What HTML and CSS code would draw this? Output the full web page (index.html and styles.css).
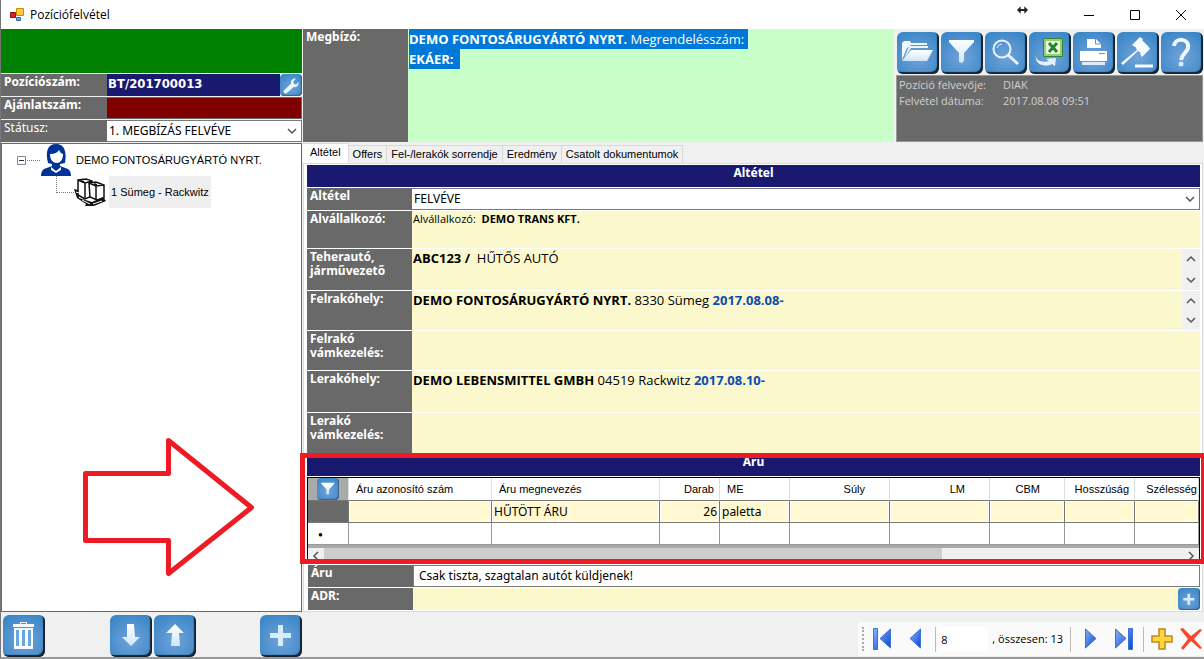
FILE: index.html
```html
<!DOCTYPE html>
<html lang="hu">
<head>
<meta charset="utf-8">
<title>Pozíciófelvétel</title>
<link rel="stylesheet" href="styles.css">
</head>
<body>
<svg class="defs" aria-hidden="true">
  <defs>
    <linearGradient id="ice" x1="0" y1="0" x2="0" y2="1"><stop offset="0" stop-color="#fff"/><stop offset="1" stop-color="#cfe6f8"/></linearGradient>
    <linearGradient id="nav" x1="0" y1="0" x2="1" y2="1"><stop offset="0" stop-color="#86b4fa"/><stop offset="1" stop-color="#0a46cc"/></linearGradient>
    <symbol id="funnel" viewBox="0 0 40 40"><path fill="url(#ice)" d="M8 7h25v2L23 20v8l-2 2-3-1v-9L8 9z"/></symbol>
    <symbol id="plus" viewBox="0 0 40 40"><path fill="#d8edfc" d="M18 9h5v8h8v5h-8v8h-5v-8h-8v-5h8z"/></symbol>
    <symbol id="down" viewBox="0 0 12 8"><path fill="none" stroke="#555" stroke-width="1.500" d="M2 2l4 4 4-4"/></symbol>
  </defs>
</svg>
<div class="window">
  <header class="titlebar">
    <svg class="app-icon" viewBox="0 0 14 14"><path fill="#ffcc40" stroke="#c98a00" d="M6.500.5h7v7h-7z"/><path fill="#d22" stroke="#811" d="M.5 4.500h5v5h-5z"/><path fill="#68a7ef" stroke="#3467ad" d="M6.500 9.500h4v3h-4z"/></svg>
    <h1 class="title">Pozíciófelvétel</h1>
    <svg class="resize" viewBox="0 0 12 8"><path fill="#222" d="M0 4l4-4v3h4V0l4 4-4 4V5H4v3z"/></svg>
    <div class="window-controls">
      <button aria-label="Kis méret"><svg viewBox="0 0 12 12"><path d="M1 6.500h10"/></svg></button>
      <button aria-label="Teljes méret"><svg viewBox="0 0 12 12"><path d="M1.500 1.500h9v9h-9z"/></svg></button>
      <button aria-label="Bezárás"><svg viewBox="0 0 12 12"><path d="M1 1l10 10M11 1L1 11"/></svg></button>
    </div>
  </header>

  <div class="workspace">
    <aside class="sidebar">
      <div class="flag"></div>
      <div class="field"><span class="label">Pozíciószám:</span><strong class="position-number">BT/201700013</strong>
        <button class="tile small" aria-label="Beállítás"><svg viewBox="0 0 40 40"><path fill="#eef7ff" d="M7 30l14-14c-1-5 3-10 9-9l-5 6 2 4 4 1 4-5c1 7-3 11-9 10L12 35c-4 1-6-2-5-5z"/></svg></button></div>
      <div class="field"><span class="label">Ajánlatszám:</span><span class="offer-number"></span></div>
      <div class="field"><label class="label light" for="status">Státusz:</label>
        <div class="select"><select id="status"><option>1. MEGBÍZÁS FELVÉVE</option></select><svg><use href="#down"/></svg></div></div>
      <div class="tree">
        <div class="node">
          <svg class="toggle" viewBox="0 0 9 9"><path fill="#fff" stroke="#888" d="M.5.5h8v8h-8z"/><path stroke="#235" d="M2 4.500h5"/></svg>
          <span class="dots"></span>
          <svg class="person" viewBox="0 0 30 32"><path fill="#003399" d="M7 19C4 7 7 0 15 0s11 7 9 19l-5 1v2l8 3q3 2 3 7H0q0-5 3-7l8-3v-2z"/><path fill="#fff" d="M9 10q7 0 9-4 1 3 4 4c0 6-3 9-6 9-4 0-7-3-7-9zM10 23l5 4 5-4v3l-5 3-5-3z"/></svg>
          <span>DEMO FONTOSÁRUGYÁRTÓ NYRT.</span>
        </div>
        <div class="node child">
          <span class="elbow"></span>
          <svg class="cargo" viewBox="0 0 32 28"><g fill="#fff" stroke="#111" stroke-width="1.500"><path d="M4 2l8-1 6 2v15l-7 3-7-4z"/><path d="M15 5l7-1 8 3v13l-7 2-7-3z"/><path d="M4 2l7 3 7-2M11 5v15M15 5l7 3 8-1M22 8v14"/></g><path fill="#111" d="M0 11l4 1 1 8 13 4 11-5 3 4-12 5h-9l1-2-9-6zM7 2l3 1v2L7 4zM20 5l3 1v2l-3-1z"/><path stroke="#fff" d="M8 22l8 4M19 26l9-3M2 14l3 1"/></svg>
          <span class="selected">1 Sümeg - Rackwitz</span>
        </div>
        <svg class="arrow" viewBox="0 0 176 140"><path fill="none" stroke="#ed1c24" stroke-width="5" stroke-linejoin="round" d="M4.500 36.500h83v-33l83 67-83 66v-33h-83z"/></svg>
      </div>
      <div class="side-actions">
        <button class="tile" aria-label="Törlés"><svg viewBox="0 0 40 40"><path fill="#f5faff" d="M10 8h7V6h7v2h7v3H10zM11 12h19v21H11z"/><path fill="none" stroke="#4e90cd" d="M18 7.500h5"/><path stroke="#6aa6dc" stroke-width="3" d="M14.500 14v16M20.500 14v16M26.500 14v16"/></svg></button>
        <div class="pair">
          <button class="tile" aria-label="Le"><svg viewBox="0 0 40 40"><path fill="url(#ice)" d="M17 8h7l1 13h5l-9 9-9-9h5z"/></svg></button>
          <button class="tile" aria-label="Fel"><svg viewBox="0 0 40 40"><path fill="url(#ice)" d="M21 8l9 9h-5l1 13h-9l1-13h-6z"/></svg></button>
        </div>
        <button class="tile" aria-label="Hozzáadás"><svg viewBox="0 0 40 40"><use href="#plus"/></svg></button>
      </div>
    </aside>

    <main class="main">
      <section class="summary">
        <div class="label client-label">Megbízó:</div>
        <div class="client"><mark><b>DEMO FONTOSÁRUGYÁRTÓ NYRT.</b> Megrendelésszám:&nbsp;</mark><br><mark><b>EKÁER:</b>&nbsp;&nbsp;</mark></div>
        <div class="tools">
          <div class="toolbar">
            <button class="tile" aria-label="Megnyitás"><svg viewBox="0 0 40 40"><path fill="#f1f8fe" d="M5 10l2-2h6l1 2h16v2H14l-4 3-5 12z"/><path fill="#e9f4fd" d="M12 13h19v2H14l-7 11z"/><path fill="url(#ice)" d="M14 17h22l-6 11H5z"/></svg></button>
            <button class="tile" aria-label="Szűrő"><svg><use href="#funnel"/></svg></button>
            <button class="tile" aria-label="Keresés"><svg viewBox="0 0 40 40"><circle cx="17" cy="16" r="8.500" fill="none" stroke="#e6f2fc" stroke-width="2"/><path fill="none" stroke="#e6f2fc" d="M12 15q1-4 5-4"/><path stroke="#e6f2fc" stroke-width="3" d="M23 22l10 9"/></svg></button>
            <button class="tile" aria-label="Excel export"><svg viewBox="0 0 40 40"><path fill="#8fd07c" stroke="#318735" d="M14.500 5.500h19v18h-19z"/><path fill="#eef6dc" d="M17 8h14v13H17z"/><path stroke="#23842c" stroke-width="3" d="M20 10l8 9M28 10l-8 9"/><path fill="#e5f2fd" d="M7 22c0 2 0 3 2 5 3 2 8 2 11 1l-3-2 10-1-1 8-3-2C15 35 5 31 7 22z"/></svg></button>
            <button class="tile" aria-label="Nyomtatás"><svg viewBox="0 0 40 40"><path fill="#fff" d="M14 6h9l5 5v4H14zM7 18h27v10H7z"/><path fill="none" stroke="#5495cf" d="M22.500 6v5h5M26 20.500h6"/><path fill="#dceefb" d="M9 29h23v3H9z"/></svg></button>
            <button class="tile" aria-label="Aukció"><svg viewBox="0 0 40 40"><path fill="#f5faff" d="M15 12l8-8 3 2-8 8zM23 21l8-8 2 3-8 8zM18 13l7-6 6 6-7 7-3-2L6 32l-2-2 16-13z"/><path stroke="#f5faff" stroke-width="3" d="M18 33h18"/></svg></button>
            <button class="tile" aria-label="Súgó"><svg viewBox="0 0 40 40"><path fill="none" stroke="#f0f8ff" stroke-width="4" d="M13 13c1-9 16-8 14 2-1 5-6 5-7 12"/><circle cx="20" cy="31" r="2.500" fill="#d5eafa"/></svg></button>
          </div>
          <dl class="meta"><dt>Pozíció felvevője:</dt><dd>DIAK</dd><dt>Felvétel dátuma:</dt><dd>2017.08.08 09:51</dd></dl>
        </div>
      </section>

      <nav class="tabs" role="tablist">
        <button role="tab" aria-selected="true">Altétel</button><button role="tab">Offers</button><button role="tab">Fel-/lerakók sorrendje</button><button role="tab">Eredmény</button><button role="tab">Csatolt dokumentumok</button>
      </nav>

      <section class="panel">
        <h2 class="band">Altétel</h2>
        <div class="row line"><label class="label" for="item">Altétel</label><div class="select"><select id="item"><option>FELVÉVE</option></select><svg><use href="#down"/></svg></div></div>
        <div class="row"><div class="label">Alvállalkozó:</div><div class="value small-text">Alvállalkozó: &nbsp;<b>DEMO TRANS KFT.</b></div></div>
        <div class="row tall"><div class="label">Teherautó, járművezető</div><div class="value"><b>ABC123 /</b>&nbsp; HŰTŐS AUTÓ<span class="spin"><svg class="up"><use href="#down"/></svg><svg><use href="#down"/></svg></span></div></div>
        <div class="row mid"><div class="label">Felrakóhely:</div><div class="value"><b>DEMO FONTOSÁRUGYÁRTÓ NYRT.</b> 8330 Sümeg <b class="date">2017.08.08-</b><span class="spin"><svg class="up"><use href="#down"/></svg><svg><use href="#down"/></svg></span></div></div>
        <div class="row mid"><div class="label">Felrakó vámkezelés:</div><div class="value"></div></div>
        <div class="row tall"><div class="label">Lerakóhely:</div><div class="value"><b>DEMO LEBENSMITTEL GMBH</b> 04519 Rackwitz <b class="date">2017.08.10-</b></div></div>
        <div class="row tall"><div class="label">Lerakó vámkezelés:</div><div class="value"></div></div>

        <section class="goods">
          <h2 class="band goods-band">Áru</h2>
          <div class="grid-box">
            <table>
              <colgroup><col class="c-head"><col class="c-id"><col class="c-name"><col class="c-qty"><col class="c-unit"><col class="c-wide"><col class="c-wide"><col class="c-cbm"><col class="c-unit"><col></colgroup>
              <thead><tr><th class="corner"><button class="tile small" aria-label="Szűrő"><svg><use href="#funnel"/></svg></button></th><th>Áru azonosító szám</th><th>Áru megnevezés</th><th class="num tight">Darab</th><th>ME</th><th class="num">Súly</th><th class="num">LM</th><th class="num">CBM</th><th class="num tight">Hosszúság</th><th class="num edge">Szélesség</th></tr></thead>
              <tbody>
                <tr class="current"><td class="rowhead"></td><td></td><td>HŰTÖTT ÁRU</td><td class="num">26</td><td>paletta</td><td></td><td></td><td></td><td></td><td></td></tr>
                <tr class="new"><td class="star">●</td><td></td><td></td><td></td><td></td><td></td><td></td><td></td><td></td><td></td></tr>
              </tbody>
            </table>
            <div class="scroll"><svg class="left"><use href="#down"/></svg><span class="track"><span class="thumb"></span></span><svg class="right"><use href="#down"/></svg></div>
          </div>
        </section>

        <div class="row line note"><label class="label" for="note">Áru</label><input id="note" value="Csak tiszta, szagtalan autót küldjenek!"></div>
        <div class="row line note"><div class="label">ADR:</div><div class="value adr"><button class="tile small" aria-label="ADR hozzáadása"><svg viewBox="0 0 40 40"><use href="#plus"/></svg></button></div></div>
      </section>

      <footer class="pager-bar">
        <div class="pager">
          <span class="grip"></span>
          <button aria-label="Első"><svg viewBox="0 0 20 22"><path fill="url(#nav)" stroke="#3a72dc" d="M1.500.5h4v21h-4zM18.500 1v19L8 10.500z"/></svg></button>
          <button aria-label="Előző"><svg viewBox="0 0 20 22"><path fill="url(#nav)" stroke="#3a72dc" d="M14.500 1v19L4 10.500z"/></svg></button>
          <span class="divider"></span>
          <input id="page" aria-label="Oldal" value="8">
          <label for="page" class="total">, összesen: 13</label>
          <span class="divider"></span>
          <button aria-label="Következő"><svg viewBox="0 0 20 22"><path fill="url(#nav)" stroke="#3a72dc" d="M5.500 1v19L16 10.500z"/></svg></button>
          <button aria-label="Utolsó"><svg viewBox="0 0 20 22"><path fill="url(#nav)" stroke="#3a72dc" d="M14.500.5h4v21h-4zM1.500 1v19L12 10.500z"/></svg></button>
          <span class="divider"></span>
          <button class="edit" aria-label="Új"><svg viewBox="0 0 22 22"><path fill="#ffd43e" stroke="#b98a1c" stroke-width="1.500" d="M8 1h6v7h7v6h-7v7H8v-7H1V8h7z"/></svg></button>
          <button class="remove" aria-label="Törlés"><svg viewBox="0 0 22 22"><path fill="#f8452c" d="M0 1l3-1 8 8 9-7 2 1-8 9 8 9-2 1-9-8-8 9-2-2 7-9z"/></svg></button>
        </div>
      </footer>
    </main>
  </div>
</div>
</body>
</html>
```
FILE: styles.css
```css
* { box-sizing: border-box; }
body { margin: 0; font: 12px/16px "Noto Sans", sans-serif; color: #000; }
h1, h2, dl, dd { margin: 0; }
button, input, select { font: inherit; color: inherit; margin: 0; padding: 0; border: 0; border-radius: 0; background: none; }
svg { display: block; flex: none; }
.defs { position: absolute; width: 0; height: 0; }

.window { display: flex; flex-direction: column; min-height: 100vh; overflow: hidden; background: #f0f0f0; border-left: 1px solid #777; border-bottom: 2px solid #999; }
.titlebar { display: flex; align-items: center; height: 29px; padding-left: 9px; background: #fff; }
.app-icon { width: 14px; height: 14px; }
.title { flex: 1; padding-left: 6px; font: 12px/16px "Open Sans", sans-serif; }
.resize { width: 11px; height: 8px; margin: 0 38px 10px 0; }
.window-controls { display: flex; }
.window-controls button { width: 46px; height: 28px; display: grid; place-items: center; }
.window-controls svg { width: 12px; height: 12px; fill: none; stroke: #000; }

.workspace { flex: 1; display: grid; grid-template-columns: 302px minmax(0, 1fr); }
.sidebar { display: flex; flex-direction: column; gap: 1px; }
.flag { height: 44px; margin-right: 1px; background: #008000; }
.field { display: grid; grid-template-columns: 106px 1fr auto; min-height: 22px; margin-right: 1px; background: #fff; }
.label { padding: 1px 3px; background: #696969; color: #fff; font-weight: bold; line-height: 14px; }
.label.light { font-weight: normal; }
.position-number { padding: 2px 1px; background: #191970; color: #fff; font: bold 13px/16px "DejaVu Sans Condensed", "DejaVu Sans", sans-serif; }
.offer-number { background: #800000; border: 1px solid #696969; border-left: 0; }
.select { position: relative; display: flex; border: 1px solid #7a7a7a; border-left: 0; background: #fff; }
.select select { flex: 1; appearance: none; padding: 0 2px; }
.select svg { position: absolute; right: 3px; top: 6px; width: 12px; height: 8px; pointer-events: none; }

.tile { width: 42px; height: 42px; padding: 0; border-radius: 6px; background: radial-gradient(circle at 50% 60%, #72a3d9, #3b87c8 85%); box-shadow: inset -2px -2px 1px #16232e; }
.tile svg { width: 40px; height: 40px; }
.tile.small { width: 22px; height: 22px; border-radius: 4px; box-shadow: inset -1px -1px 1px #3f5f7b; }
.tile.small svg { width: 21px; height: 21px; }

.tree { position: relative; flex: 1; margin-right: 1px; border: 1px solid #696969; background: #fff; font: 11px/16px "Liberation Sans", sans-serif; }
.node { display: flex; align-items: center; height: 32px; padding-left: 15px; }
.toggle { width: 9px; height: 9px; }
.dots { width: 13px; margin: 0 1px; border-top: 1px dotted #777; }
.person { width: 30px; height: 32px; margin-right: 5px; }
.node.child { padding-left: 54px; }
.elbow { align-self: flex-start; width: 18px; height: 17px; border: dotted #777; border-width: 0 0 1px 1px; }
.cargo { width: 32px; height: 28px; margin-right: 3px; }
.selected { padding: 8px 2px; background: #efefef; }
.arrow { position: absolute; left: 79px; bottom: 34px; width: 176px; height: 140px; }
.side-actions { display: flex; justify-content: space-between; padding: 2px 1px 0 2px; height: 44px; }
.pair { display: flex; gap: 2px; }

.main { display: flex; flex-direction: column; min-width: 0; }
.summary { display: grid; grid-template-columns: 105px minmax(0, 1fr) auto; min-height: 113px; }
.client { padding-left: 1px; background: #c8ffc8; font: 13px/20px "Open Sans", sans-serif; }
.client mark { display: inline-block; background: #0078d7; color: #fff; }
.tools { display: flex; flex-direction: column; padding: 3px 1px 0 2px; }
.toolbar { display: flex; gap: 2px; padding-left: 1px; }
.meta { flex: 1; display: grid; grid-template-columns: 104px 1fr; align-content: start; margin-top: 1px; padding: 1px 2px; border: 1px solid #999; background: #696969; color: #d0d0d0; font: 11px/16px "Open Sans", sans-serif; }

.tabs { display: flex; align-items: flex-end; height: 21px; font: 11px/15px "Liberation Sans", sans-serif; }
.tabs button { height: 18px; padding: 0 4px; border: 1px solid #d9d9d9; border-left: 0; border-bottom: 0; }
.tabs [aria-selected] { height: 20px; padding: 0 7px 3px; background: #fff; }

.panel { flex: 1; display: flex; flex-direction: column; gap: 1px; padding: 1px 2px 1px 3px; margin-right: 1px; border: 1px solid #dcdcdc; background: #fff; }
.band { height: 22px; background: #191970; color: #fff; text-align: center; font: bold 12px/16px "Noto Sans", sans-serif; }
.row { display: grid; grid-template-columns: 105px minmax(0, 1fr); min-height: 37px; }
.row.line { min-height: 22px; }
.row.mid { min-height: 39px; }
.row.tall { min-height: 41px; }
.value { position: relative; padding: 0 1px; background: #fcf8ce; font: 13px/18px "Open Sans", sans-serif; }
.value.small-text { font-size: 11px; line-height: 15px; }
.date { color: #0a4cb4; }
.spin { position: absolute; right: 0; top: 0; bottom: 0; display: flex; flex-direction: column; justify-content: space-between; padding: 6px 3px; background: #f0f0f0; }
.spin svg { width: 12px; height: 8px; }
.up { transform: rotate(180deg); }

.goods { position: relative; }
.goods::after { content: ""; position: absolute; inset: -2px -6px 0 -7px; border: 5px solid #ed1c24; pointer-events: none; }
.goods-band { height: 21px; line-height: 14px; }
.grid-box { margin-top: 1px; border: 1px solid #000; border-bottom: 0; background: #aaa; }
table { width: 100%; table-layout: fixed; border-collapse: separate; border-spacing: 0; background: #fff; }
.c-head { width: 41px; } .c-id { width: 143px; } .c-name { width: 168px; } .c-qty { width: 60px; } .c-unit { width: 70px; } .c-wide { width: 100px; } .c-cbm { width: 75px; }
th { height: 23px; padding: 0 7px; border-right: 1px solid #ddd; border-bottom: 1px solid #777; text-align: left; white-space: nowrap; font: 11px/16px "Liberation Sans", sans-serif; }
th.num { padding-right: 24px; text-align: right; }
th.tight { padding-right: 5px; }
th.edge { padding-right: 1px; }
th.corner { padding: 0 9px; background: #aaa; }
th.corner .tile { display: block; }
td { height: 22px; padding: 0 2px; border-right: 1px solid #999; border-bottom: 1px solid #999; line-height: 16px; }
td.num { text-align: right; }
.current td { border-color: #777; background: #fff8d0; box-shadow: inset 0 0 0 1px #fff; }
.current td.rowhead { background: #696969; box-shadow: none; }
.star { padding-left: 10px; font-size: 8px; }
.scroll { display: flex; align-items: center; height: 16px; margin-top: 3px; background: #f0f0f0; }
.scroll svg { width: 12px; height: 8px; margin: 0 2px; }
.left { transform: rotate(90deg); }
.right { transform: rotate(-90deg); }
.track { flex: 1; align-self: stretch; }
.thumb { display: block; width: 72%; height: 100%; background: #cdcdcd; }
.row.note { margin-left: 1px; }
.note input { min-width: 0; padding: 0 5px; border: 1px solid #7a7a7a; }
.adr { display: flex; justify-content: flex-end; padding: 0; }

.pager-bar { display: flex; justify-content: flex-end; padding-top: 10px; height: 45px; }
.pager { display: flex; align-items: center; height: 34px; background: #fafafa; font: 11px/16px "Open Sans", sans-serif; }
.pager svg { width: 20px; height: 22px; margin: 0 auto; }
.pager button { width: 34px; }
.pager .edit { width: 32px; }
.pager .remove { width: 26px; }
.pager .edit svg, .pager .remove svg { width: 22px; }
.grip { height: 24px; margin: 0 1px 0 4px; border-left: 2px dotted #aaa; }
.divider { height: 25px; margin: 0 2px; border-left: 1px solid #bbb; }
.pager input { width: 50px; height: 24px; padding: 0 3px; background: #fff; }
.total { padding: 0 5px 0 4px; }
```
